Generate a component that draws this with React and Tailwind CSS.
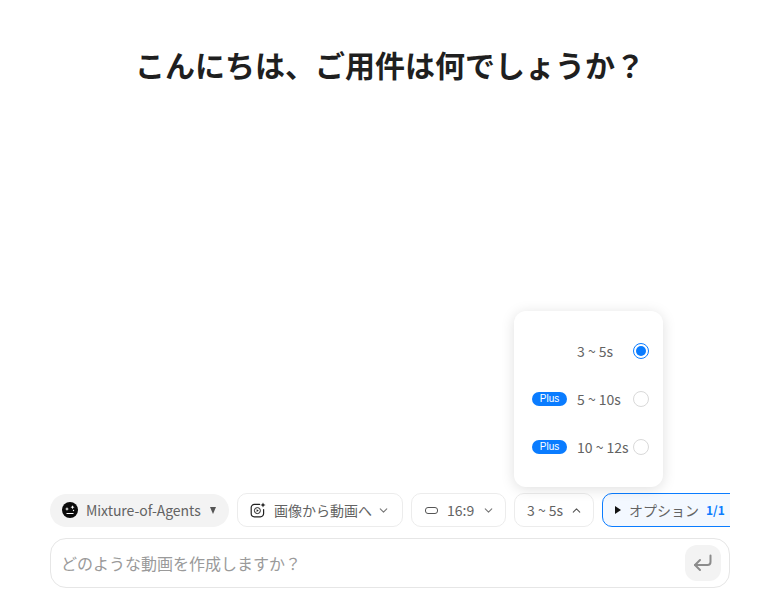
import React from 'react';
import { ChevronDown, ChevronUp } from 'lucide-react';

const FONT = { fontFamily: '"Noto Sans CJK JP", "Noto Sans", sans-serif' };

const AgentIcon = () => (
  <svg width="16" height="16" viewBox="0 0 16 16" className="shrink-0">
    <circle cx="8" cy="8" r="8" fill="#0b0b0b" />
    <path d="M5 5l.6 1.4L7 7l-1.4.6L5 9l-.6-1.4L3 7l1.4-.6z" fill="#fff" />
    <path d="M10.5 3.2l.6 1.4 1.4.6-1.4.6-.6 1.4-.6-1.4-1.4-.6 1.4-.6z" fill="#fff" />
    <circle cx="11.5" cy="8.5" r="0.7" fill="#fff" />
    <rect x="4.5" y="11" width="7" height="1" fill="#fff" />
  </svg>
);

const ImageVideoIcon = () => (
  <svg width="16" height="16" viewBox="0 0 16 16" fill="none" stroke="#222" strokeWidth="1.2" className="shrink-0">
    <path d="M9.6 2.4H4.4A3.2 3.2 0 0 0 1.2 5.6v6a3.2 3.2 0 0 0 3.2 3.2h6a3.2 3.2 0 0 0 3.2-3.2V7.6" strokeLinecap="round" />
    <circle cx="7.4" cy="8.6" r="3" strokeWidth="1" />
    <path d="M6.6 7.2v2.8l2.2-1.4z" fill="#222" stroke="none" />
    <path d="M13 .4l.8 1.8 1.8.8-1.8.8-.8 1.8-.8-1.8-1.8-.8 1.8-.8z" fill="#222" stroke="none" />
  </svg>
);

const ReturnIcon = () => (
  <svg width="20" height="20" viewBox="0 0 20 20" fill="none" stroke="#8c8c8c" strokeWidth="2" strokeLinecap="round" strokeLinejoin="round">
    <path d="M17.5 2.5v6.5a3 3 0 0 1-3 3H2" />
    <path d="M7 7l-5 5 5 5" />
  </svg>
);

const ToolButton = ({ children, className = '' }) => (
  <button type="button" className={`flex h-[34px] shrink-0 items-center rounded-[10px] border border-[#ececec] bg-white text-sm text-[#636363] ${className}`}>
    {children}
  </button>
);

const options = [
  { label: '3 ~ 5s', selected: true },
  { label: '5 ~ 10s', plus: true },
  { label: '10 ~ 12s', plus: true },
];

const DurationMenu = () => (
  <div className="absolute bottom-[40px] left-[464px] z-10 flex h-[176px] w-[149px] flex-col justify-center gap-[24px] rounded-[12px] bg-white pr-[14px] pl-[18px] shadow-[0_2px_14px_rgba(0,0,0,0.13)]">
    {options.map((o) => (
      <div key={o.label} className="flex h-[24px] items-center text-sm text-[#636363]">
        <span className="flex w-[45px] shrink-0">
          {o.plus && (
            <span className="flex h-[14px] w-[35px] items-center justify-center rounded-full bg-[#0a7cff] text-[10px] text-white" style={{ fontFamily: '"Liberation Sans", sans-serif' }}>
              Plus
            </span>
          )}
        </span>
        <span className="flex-1 whitespace-nowrap">{o.label}</span>
        {o.selected ? (
          <span className="flex size-[16px] shrink-0 items-center justify-center rounded-full border border-[#0a7cff]">
            <span className="size-[10px] rounded-full bg-[#0a7cff]" />
          </span>
        ) : (
          <span className="size-[16px] shrink-0 rounded-full border border-[#d9d9d9]" />
        )}
      </div>
    ))}
  </div>
);

export default function App() {
  return (
    <div className="flex h-[605px] w-[757px] flex-col overflow-hidden bg-white" style={FONT}>
      <h1 className="mt-[42px] ml-[50px] w-[680px] text-center text-[30px] leading-[45px] font-bold text-[#1f1f1f]">
        こんにちは、ご用件は何でしょうか？
      </h1>

      <div className="flex-1" />

      <div className="relative mb-[11px] ml-[50px] w-[680px]">
        <DurationMenu />
        <div className="flex items-center gap-[8px] overflow-hidden">
          <button type="button" className="flex h-[33px] w-[179px] shrink-0 items-center rounded-full bg-[#f3f3f3] pl-[12px] text-sm text-[#636363]">
            <AgentIcon />
            <span className="ml-[8px] whitespace-nowrap tracking-[-0.05px]">Mixture-of-Agents</span>
            <span className="ml-[9px] h-0 w-0 border-x-[3.5px] border-t-[7px] border-x-transparent border-t-[#555]" />
          </button>

          <ToolButton className="w-[166px] pl-[12px]">
            <ImageVideoIcon />
            <span className="ml-[8px] whitespace-nowrap">画像から動画へ</span>
            <ChevronDown size={13} className="ml-[5px] text-[#777]" />
          </ToolButton>

          <ToolButton className="w-[95px] pl-[13px]">
            <span className="h-[7px] w-[13px] rounded-[3px] border border-[#555]" />
            <span className="ml-[9px]">16:9</span>
            <ChevronDown size={13} className="ml-[8px] text-[#777]" />
          </ToolButton>

          <ToolButton className="w-[80px] pl-[12px]">
            <span className="whitespace-nowrap">3 ~ 5s</span>
            <ChevronUp size={13} className="ml-[7px] text-[#555]" />
          </ToolButton>

          <button type="button" className="flex h-[34px] w-[140px] shrink-0 items-center rounded-[10px] border border-[#0a7cff] bg-[#f3f8ff] pl-[12px] text-sm text-[#636363]">
            <span className="h-0 w-0 border-y-[4px] border-l-[6px] border-y-transparent border-l-[#111]" />
            <span className="ml-[8px] whitespace-nowrap">オプション</span>
            <span className="ml-[7px] text-xs font-bold text-[#0a7cff]">1/1</span>
          </button>
        </div>
      </div>

      <div className="mb-[17px] ml-[50px] flex h-[50px] w-[680px] items-center justify-between rounded-[16px] border border-[#e6e6e6] bg-white pr-[8px] pl-[10px]">
        <span className="text-base text-[#9a9a9a]">どのような動画を作成しますか？</span>
        <span className="flex size-[36px] items-center justify-center rounded-[12px] bg-[#f3f3f3]">
          <ReturnIcon />
        </span>
      </div>
    </div>
  );
}
